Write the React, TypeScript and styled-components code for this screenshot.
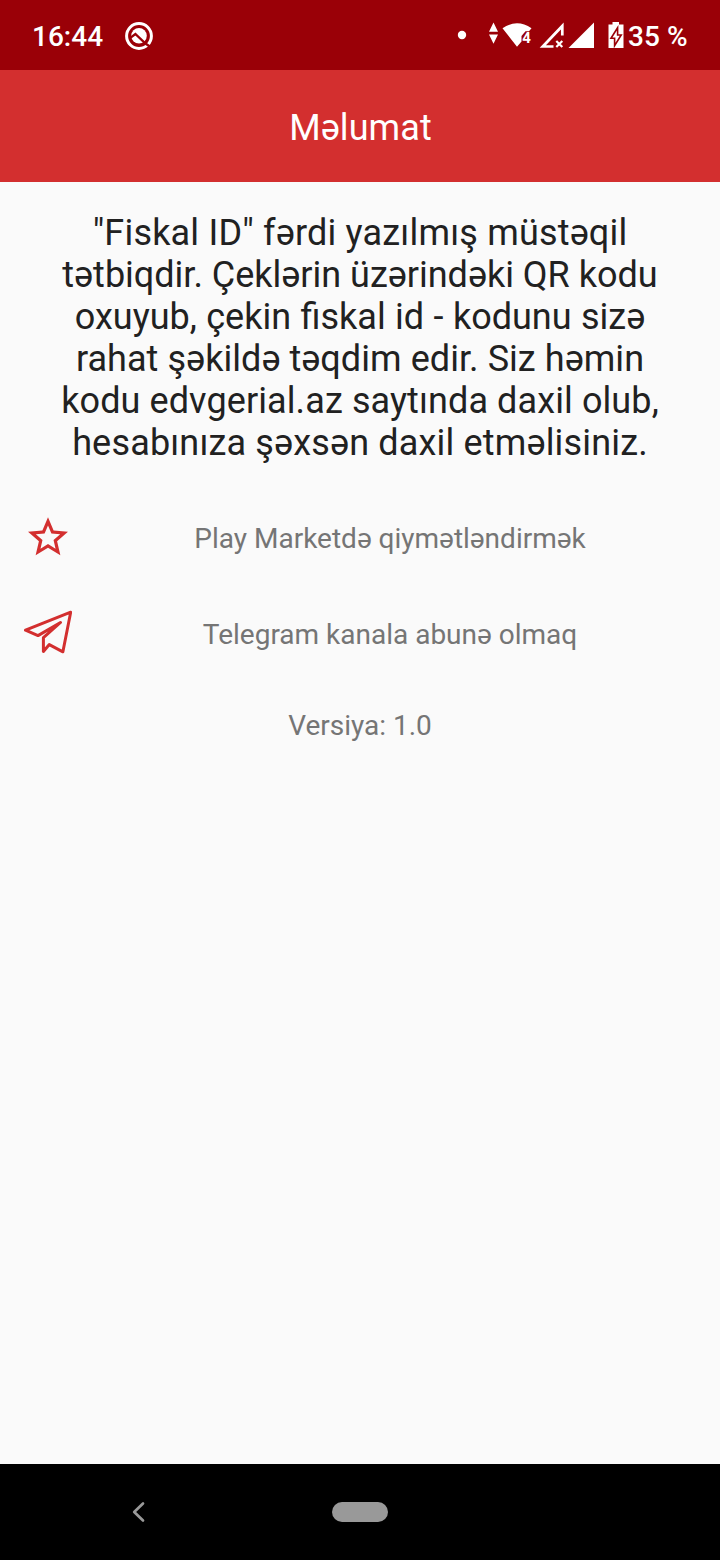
import React from 'react';
import styled, { createGlobalStyle } from 'styled-components';

const GlobalStyle = createGlobalStyle`
  * { box-sizing: border-box; }
  body { margin: 0; background: #fafafa; }
`;

const Screen = styled.div`
  width: 720px;
  height: 1560px;
  display: flex;
  flex-direction: column;
  background: #fafafa;
  font-family: Roboto, "Noto Sans", sans-serif;
  overflow: hidden;
`;

const StatusBar = styled.header`
  height: 70px;
  padding: 2px 32.5px 0 32px;
  display: flex;
  align-items: center;
  justify-content: space-between;
  background: #9a0007;
  color: #fff;
  font-size: 28px;
  font-weight: 500;
`;

const StatusGroup = styled.div<{ $gap?: number }>`
  display: flex;
  align-items: center;
  gap: ${(p) => p.$gap ?? 0}px;
`;

const StatusText = styled.span`
  padding-top: 2px;
  line-height: 34px;
  white-space: nowrap;
`;

const Glyph = styled.svg`
  display: block;
  flex: none;
`;

const AppBar = styled.div`
  height: 112px;
  padding: 5px 0 0 1px;
  display: flex;
  align-items: center;
  justify-content: center;
  background: #d32f2f;
`;

const Title = styled.h1`
  margin: 0;
  color: #fff;
  font-size: 36px;
  font-weight: 400;
  line-height: 43px;
  letter-spacing: 0.1px;
`;

const Content = styled.main`
  flex: 1;
  padding-top: 30px;
  display: flex;
  flex-direction: column;
`;

const Description = styled.p`
  margin: 0 0 26px;
  color: #212121;
  font-size: 36px;
  line-height: 42px;
  text-align: center;
`;

const Line = styled.span<{ $spacing: number; $wordSpacing: number }>`
  display: block;
  letter-spacing: ${(p) => p.$spacing}px;
  word-spacing: ${(p) => p.$wordSpacing}px;
  white-space: nowrap;
`;

const Row = styled.div`
  height: 96px;
  padding: 0 24px;
  display: flex;
  align-items: center;
`;

const RowLabel = styled.span`
  flex: 1;
  padding: 2px 0 0 12px;
  color: #757575;
  font-size: 28px;
  line-height: 34px;
  text-align: center;
`;

const Version = styled.div`
  margin-top: 27px;
  color: #757575;
  font-size: 28px;
  line-height: 34px;
  text-align: center;
`;

const NavBar = styled.nav`
  height: 96px;
  display: grid;
  grid-template-columns: 332px 56px 332px;
  align-items: center;
  background: #000;
`;

const BackSlot = styled.div`
  padding-left: 130px;
`;

const HomePill = styled.div`
  height: 20px;
  border-radius: 10px;
  background: #999;
`;

const NotificationIcon = () => (
  <Glyph width="30" height="30" viewBox="0 0 30 30">
    <circle cx="15" cy="15" r="12.4" fill="none" stroke="#fff" strokeWidth="3" />
    <circle cx="15" cy="14.8" r="7.8" fill="#fff" />
    <path d="M5.6 17.4L11.4 13L21.5 22.6L25.8 25.4" fill="none" stroke="#9a0007" strokeWidth="2.4" />
  </Glyph>
);

const SystemIcons = () => (
  <Glyph width="170" height="32" viewBox="456 20 170 32">
    <g fill="#fff">
      <circle cx="462" cy="35" r="4.2" />
      <path d="M493.5 22.5L498 31.7H489ZM489 34.5H498L493.5 43.7Z" />
      <path d="M502.5 28.2Q517 18.5 531.5 28.2L529 31.2H525.5L521.5 36V41.5L517 46.8Z" />
      <path d="M594 22.5V48H568.5Z" />
      <path d="M612.5 22H619V24.5H623.5V48H608.5V24.5H612.5Z" />
    </g>
    <path
      d="M617.6 27.8L611 38.2H614.6V45.6L621.2 35H617.6Z"
      fill="#fff"
      stroke="#9a0007"
      strokeWidth="1.6"
    />
    <path d="M562.3 35.5V26L542.8 46.5H553.5" fill="none" stroke="#fff" strokeWidth="2.7" />
    <path d="M556.3 41L562.3 47M562.3 41L556.3 47" stroke="#fff" strokeWidth="2.2" />
    <text
      x="522.3"
      y="43"
      fill="#fff"
      fontFamily="Roboto, sans-serif"
      fontSize="15"
      fontWeight="700"
    >
      4
    </text>
  </Glyph>
);

const StarIcon = () => (
  <Glyph width="48" height="48" viewBox="0 0.35 24 24" fill="#d32f2f">
    <path d="M22 9.24l-7.19-.62L12 2 9.19 8.63 2 9.24l5.46 4.73L5.82 21 12 17.27 18.18 21l-1.63-7.03L22 9.24zM12 15.4l-3.76 2.27 1-4.28-3.32-2.88 4.38-.38L12 6.1l1.71 4.04 4.38.38-3.32 2.88 1 4.28L12 15.4z" />
  </Glyph>
);

const TelegramIcon = () => (
  <Glyph width="48" height="48" viewBox="24 610 48 48">
    <path
      d="M60.5 622.5L38 635.6L25.5 630.2L70.7 612.2L62.9 651.8L49.3 644.6L43.4 651.4V637.6Z"
      fill="none"
      stroke="#d32f2f"
      strokeWidth="3"
      strokeLinejoin="round"
    />
  </Glyph>
);

const BackIcon = () => (
  <Glyph width="18" height="24" viewBox="0 0 18 24">
    <path d="M13 3.5L4.2 12L13 20.5" fill="none" stroke="#999" strokeWidth="2.7" strokeLinecap="round" strokeLinejoin="round" />
  </Glyph>
);

const description = [
  { text: '"Fiskal ID" fərdi yazılmış müstəqil', spacing: 0.19, wordSpacing: 0 },
  { text: 'tətbiqdir. Çeklərin üzərindəki QR kodu', spacing: 0, wordSpacing: 0 },
  // Word spacing only, so that the "fi" ligature is kept.
  { text: 'oxuyub, çekin fiskal id - kodunu sizə', spacing: 0, wordSpacing: 0.5 },
  { text: 'rahat şəkildə təqdim edir. Siz həmin', spacing: 0.06, wordSpacing: 0 },
  { text: 'kodu edvgerial.az saytında daxil olub,', spacing: 0.1, wordSpacing: 0 },
  { text: 'hesabınıza şəxsən daxil etməlisiniz.', spacing: 0.17, wordSpacing: 0 },
];

export default function App() {
  return (
    <Screen>
      <GlobalStyle />
      <StatusBar>
        <StatusGroup $gap={21}>
          <StatusText>16:44</StatusText>
          <NotificationIcon />
        </StatusGroup>
        <StatusGroup $gap={2.5}>
          <SystemIcons />
          <StatusText>35 %</StatusText>
        </StatusGroup>
      </StatusBar>
      <AppBar>
        <Title>Məlumat</Title>
      </AppBar>
      <Content>
        <Description>
          {description.map((line) => (
            <Line key={line.text} $spacing={line.spacing} $wordSpacing={line.wordSpacing}>
              {line.text}
            </Line>
          ))}
        </Description>
        <Row>
          <StarIcon />
          <RowLabel>Play Marketdə qiymətləndirmək</RowLabel>
        </Row>
        <Row>
          <TelegramIcon />
          <RowLabel>Telegram kanala abunə olmaq</RowLabel>
        </Row>
        <Version>Versiya: 1.0</Version>
      </Content>
      <NavBar>
        <BackSlot>
          <BackIcon />
        </BackSlot>
        <HomePill />
      </NavBar>
    </Screen>
  );
}
